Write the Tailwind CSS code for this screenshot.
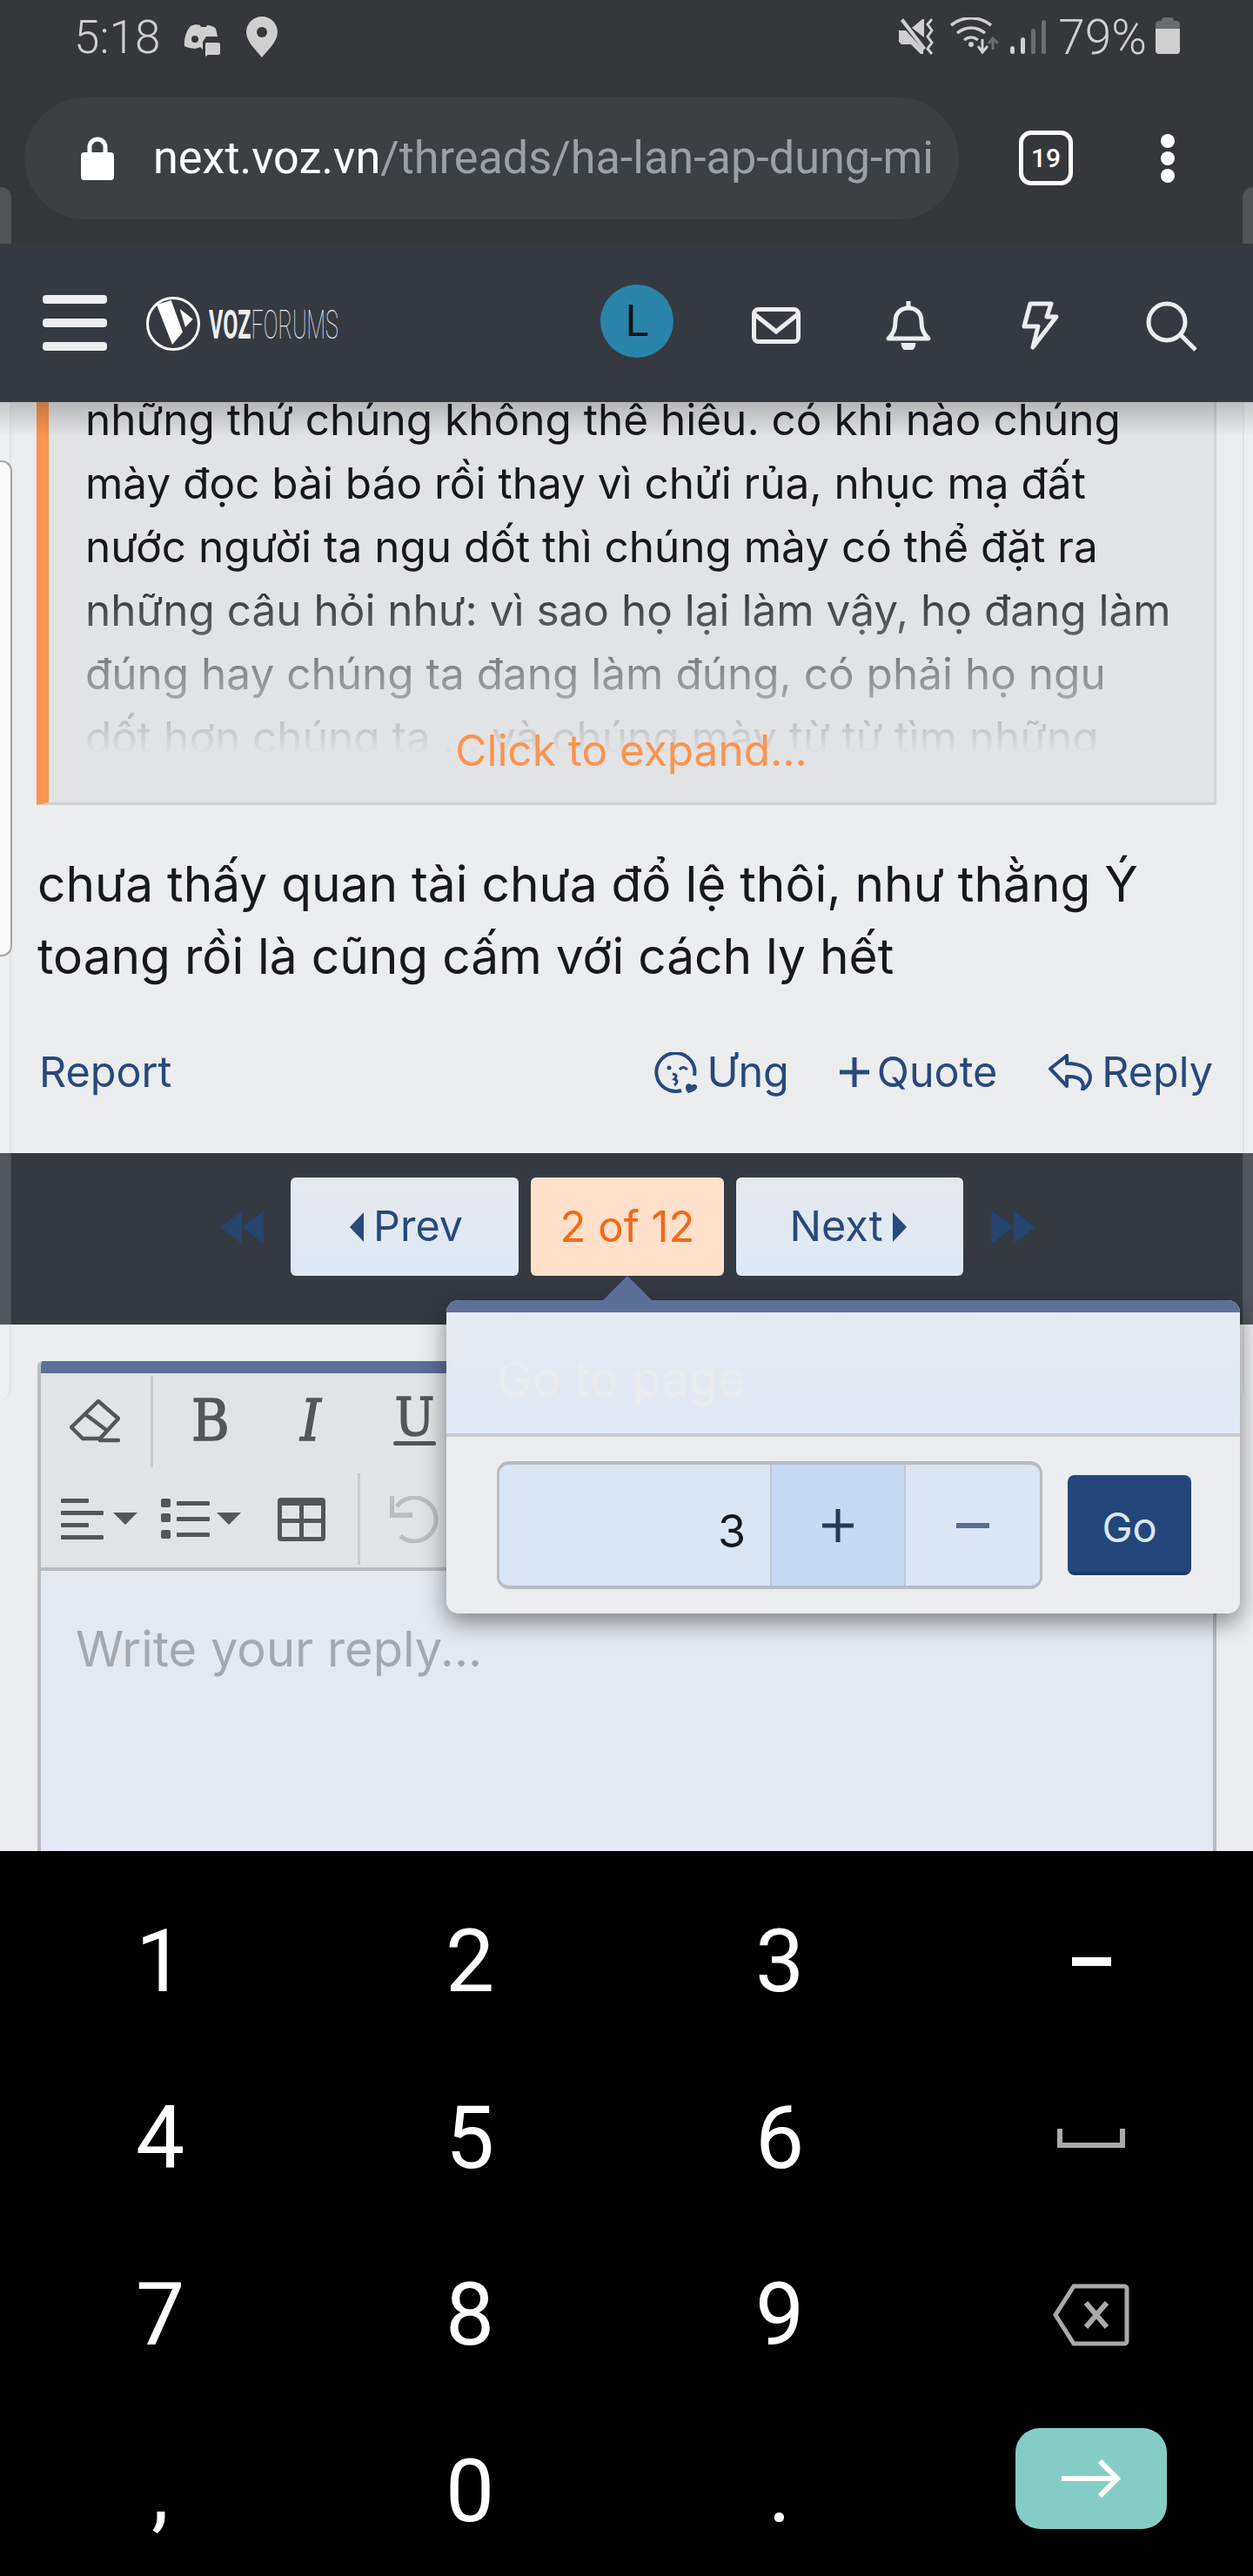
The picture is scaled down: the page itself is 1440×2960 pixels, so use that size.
<!DOCTYPE html>
<html lang="vi">
<head>
  <meta charset="UTF-8" />
  <title>next.voz.vn</title>
  <script src="https://cdn.jsdelivr.net/npm/@tailwindcss/browser@4"></script>
</head>
<body class="font-['Inter',sans-serif]">
<div class="relative w-[1440px] h-[2960px] overflow-hidden bg-[#ebedef] flex flex-col">

  <!-- status bar -->
  <div class="h-[105px] shrink-0 bg-[#36373b] flex items-start justify-between text-[#cfcfcf] font-['Roboto',sans-serif]">
    <div class="flex items-start">
      <span class="ml-[85px] mt-[13px] text-[53px] leading-[60px] font-light">5:18</span>
      <svg class="ml-[27px] mt-[28px] w-[42px] h-[37px]" viewBox="0 0 42 37" fill="#cfcfcf"><path d="M8 2c4-2 8-2 11-1l1 2h6l1-2c4 0 7 1 10 4l2 9h-13l-4 6v9H22l-3-3c-5 3-11 2-18-1C0 18 3 7 8 2z"/><circle cx="13" cy="17" r="4" fill="#36373b"/><path d="M26 21h14a2 2 0 0 1 2 2v10a2 2 0 0 1-2 2H28l-3 2v-14a2 2 0 0 1 1-2z"/></svg>
      <svg class="ml-[30px] mt-[19px] w-[36px] h-[47px]" viewBox="0 0 36 47"><path fill="#cfcfcf" d="M18 0c10 0 18 8 18 18 0 11-12 21-18 29C12 39 0 29 0 18 0 8 8 0 18 0z"/><circle cx="18" cy="18" r="6" fill="#36373b"/></svg>
    </div>
    <div class="flex items-start">
      <svg class="mt-[21px] w-[44px] h-[42px]" viewBox="0 0 44 42" fill="#cfcfcf"><path d="M0 14h8l20 22v5h-3L14 30H3l-3-3z"/><path d="M2 3l3-3 26 34-3 3z"/><path d="M15 11L27 1h2v21z"/><path d="M38 1l-5 6 5 7-5 7 5 7-5 7 5 6" fill="none" stroke="#cfcfcf" stroke-width="3"/></svg>
      <svg class="ml-[15px] mt-[20px] w-[58px] h-[43px]" viewBox="0 0 58 43" fill="none"><path d="M1 9c14-11 32-11 46 0M8 18c10-8 22-8 32 0M16 26c5-4 11-4 16 0" stroke="#cfcfcf" stroke-width="3.5"/><circle cx="24" cy="31" r="3" fill="#cfcfcf"/><path d="M37 25v14M32 33l5 7 6-7" stroke="#cfcfcf" stroke-width="3"/><path d="M49 37V25M44 30l5-6 6 6" stroke="#6c6d70" stroke-width="3"/></svg>
      <div class="ml-[11px] mt-[23px] h-[39px] flex items-end gap-[7px]">
        <span class="w-[5px] h-[9px] rounded-sm bg-[#cfcfcf]"></span>
        <span class="w-[5px] h-[19px] rounded-sm bg-[#cfcfcf]"></span>
        <span class="w-[5px] h-[29px] rounded-sm bg-[#6c6d70]"></span>
        <span class="w-[5px] h-[39px] rounded-sm bg-[#6c6d70]"></span>
      </div>
      <span class="ml-[14px] mt-[13px] text-[55px] leading-[60px] font-light">79%</span>
      <div class="ml-[10px] mr-[84px] mt-[20px] w-[28px] h-[42px] flex flex-col items-center">
        <span class="w-[14px] h-[4px] bg-[#6c6d70] rounded-t-sm"></span>
        <span class="w-[28px] h-[9px] bg-[#6c6d70] rounded-t-sm"></span>
        <span class="w-[28px] h-[29px] bg-[#cfcfcf] rounded-b-sm"></span>
      </div>
    </div>
  </div>

  <!-- chrome url bar -->
  <div class="h-[175px] shrink-0 bg-[#36373b] flex items-start">
    <div class="ml-[28px] mt-[7px] w-[1074px] h-[140px] rounded-[70px] bg-[#3c4043] flex items-center">
      <svg class="ml-[65px] w-[38px] h-[50px]" viewBox="0 0 38 50"><path d="M10 20v-8a9 9 0 0 1 18 0v8" fill="none" stroke="#fff" stroke-width="5"/><rect x="0" y="18" width="38" height="32" rx="4" fill="#fff"/></svg>
      <div class="ml-[45px] w-[895px] overflow-hidden whitespace-nowrap text-[52.200px] leading-[60px] font-['Roboto',sans-serif] text-[#9aa0a6]"><span class="text-white">next.voz.vn</span>/threads/ha-lan-ap-dung-mi</div>
    </div>
    <div class="ml-[69px] mt-[45px] w-[62px] h-[63px] rounded-[14px] border-[5px] border-white flex items-center justify-center text-white text-[30px] leading-none font-medium font-['Roboto',sans-serif]">19</div>
    <div class="ml-[101px] mt-[49px] w-[16px] flex flex-col gap-[4px]">
      <span class="w-[16px] h-[16px] rounded-full bg-white"></span>
      <span class="w-[16px] h-[16px] rounded-full bg-white"></span>
      <span class="w-[16px] h-[16px] rounded-full bg-white"></span>
    </div>
  </div>

  <!-- forum nav -->
  <div class="relative z-10 h-[182px] shrink-0 bg-[#353a42] flex items-start">
    <div class="ml-[49px] mt-[59px] w-[74px] flex flex-col gap-[17px]">
      <span class="h-[10px] rounded-sm bg-[#ebedef]"></span>
      <span class="h-[10px] rounded-sm bg-[#ebedef]"></span>
      <span class="h-[10px] rounded-sm bg-[#ebedef]"></span>
    </div>
    <svg class="ml-[45px] mt-[61px] w-[62px] h-[62px]" viewBox="0 0 62 62"><circle cx="31" cy="31" r="29.5" fill="none" stroke="#fff" stroke-width="3"/><path fill="#fff" d="M12 9l16.700-5L42 40.700 30 55zM38.700 14l15 11.700L45 35z"/></svg>
    <div class="ml-[10px] mt-[68px] w-[150px] h-[50px] whitespace-nowrap text-[#ebedef] text-[46px] leading-[50px] font-['Roboto',sans-serif]"><span class="inline-block origin-left scale-x-[0.545]"><b class="font-bold">VOZ</b><span class="font-thin">FORUMS</span></span></div>
    <div class="ml-[300px] mt-[47px] w-[84px] h-[84px] rounded-full bg-[#2a84a9] flex items-center justify-center text-[#10151c] text-[50px] leading-none font-['Roboto',sans-serif]">L</div>
    <svg class="ml-[90px] mt-[73px] w-[56px] h-[42px]" viewBox="0 0 56 42" fill="none" stroke="#ebedef" stroke-width="5"><rect x="2.500" y="2.500" width="51" height="37" rx="5"/><path d="M3 8l25 20L53 8"/></svg>
    <svg class="ml-[98px] mt-[66px] w-[52px] h-[56px]" viewBox="0 0 52 56" fill="none" stroke="#ebedef" stroke-width="5"><path d="M3 43c6-6 8-11 8-20 0-9 6-15 15-15s15 6 15 15c0 9 2 14 8 20z" stroke-linejoin="round"/><path d="M26 0v8" /><path d="M20 48c0 10 12 10 12 0" fill="#ebedef"/></svg>
    <svg class="ml-[103px] mt-[66px] w-[44px] h-[56px]" viewBox="0 0 44 56" fill="none" stroke="#ebedef" stroke-width="5" stroke-linejoin="round"><path d="M11 3h24l-5 15h11L14 53l6-24H4z"/></svg>
    <svg class="ml-[99px] mt-[66px] w-[60px] h-[58px]" viewBox="0 0 60 58" fill="none" stroke="#ebedef" stroke-width="5"><circle cx="25" cy="24" r="21"/><path d="M41 39l17 17"/></svg>
  </div>

  <!-- scrolled post -->
  <div class="h-[863px] shrink-0 flex flex-col">
    <div class="mx-[42px] w-[1356px] h-[463px] shrink-0 relative bg-[#e2e3e5] border-l-[14px] border-l-[#fb9450] border-r-[3px] border-r-[#d3d4d6] border-b-[3px] border-b-[#d0d1d3]">
      <div class="relative h-[405px] overflow-hidden">
        <div class="-mt-[16px] ml-[42px] w-[1270px] text-[#15181d] text-[49.500px] leading-[73px] whitespace-nowrap">
          <p>những thứ chúng không thể hiểu. có khi nào chúng</p>
          <p>mày đọc bài báo rồi thay vì chửi rủa, nhục mạ đất</p>
          <p>nước người ta ngu dốt thì chúng mày có thể đặt ra</p>
          <p>những câu hỏi như: vì sao họ lại làm vậy, họ đang làm</p>
          <p>đúng hay chúng ta đang làm đúng, có phải họ ngu</p>
          <p>dốt hơn chúng ta . . và chúng mày từ từ tìm những</p>
        </div>
        <div class="absolute left-0 right-0 bottom-0 h-[220px] bg-gradient-to-b from-[#e2e3e5]/0 to-[#e2e3e5]"></div>
      </div>
      <div class="absolute left-0 right-0 top-[364px] text-center text-[#fb9450] text-[49.500px] leading-[73px]">Click to expand...</div>
    </div>
    <div class="ml-[43px] mt-[49px] text-[#15181d] text-[56.800px] leading-[83px] whitespace-nowrap">
      <p>chưa thấy quan tài chưa đổ lệ thôi, như thằng Ý</p>
      <p>toang rồi là cũng cấm với cách ly hết</p>
    </div>
    <div class="mt-[62px] h-[60px] flex items-center text-[#27497c] text-[48.500px] leading-[60px]">
      <span class="ml-[45px]">Report</span>
      <svg class="ml-[555px] w-[50px] h-[47px]" viewBox="0 0 50 47" fill="none" stroke="#27497c" stroke-width="4"><path d="M31 44A22 22 0 1 1 46 27"/><circle cx="17" cy="18" r="2.500" fill="#27497c" stroke="none"/><path d="M29 20q4-5 9 0" stroke-width="3"/><path d="M21 25q7 1 2 6q6 2 0 7" stroke-width="3"/><path fill="#27497c" stroke="none" d="M36 40c0-4 5-5 7-2 2-2 7-1 6 3-1 3-6 5-10 6-2-2-3-4-3-7z"/></svg>
      <span class="ml-[10px]">Ưng</span>
      <svg class="ml-[58px] w-[34px] h-[34px]" viewBox="0 0 34 34" stroke="#27497c" stroke-width="5"><path d="M17 0v34M0 17h34"/></svg>
      <span class="ml-[9px]">Quote</span>
      <svg class="ml-[59px] w-[50px] h-[42px]" viewBox="0 0 50 42" fill="none" stroke="#27497c" stroke-width="4" stroke-linejoin="round"><path d="M2 17L21 2v9c17 0 27 6 27 16 0 6-4 11-9 14 1-3 1-6 0-8-3-6-9-7-18-7v11z"/></svg>
      <span class="ml-[11px]">Reply</span>
    </div>
  </div>

  <!-- pagination bar -->
  <div class="h-[197px] shrink-0 bg-[#353a42] flex items-start">
    <svg class="ml-[253px] mt-[66px] w-[50px] h-[38px]" viewBox="0 0 50 38" fill="#27456f"><path d="M25 0v38L0 19zM50 0v38L25 19z"/></svg>
    <div class="ml-[31px] mt-[28px] w-[262px] h-[113px] pl-[4px] rounded-md bg-gradient-to-b from-[#e6e9ed] to-[#dde8f5] flex items-center justify-center text-[#27497c] text-[48.500px] leading-none">
      <svg class="mr-[11px] w-[16px] h-[34px]" viewBox="0 0 16 34" fill="#27497c"><path d="M16 0v34L0 17z"/></svg>Prev
    </div>
    <div class="ml-[14px] mt-[28px] w-[222px] h-[113px] rounded-md bg-[#ffe0cb] flex items-center justify-center text-[#f26a1b] text-[49px] leading-none">2 of 12</div>
    <div class="ml-[14px] mt-[28px] w-[261px] h-[113px] pr-[4px] rounded-md bg-gradient-to-b from-[#e6e9ed] to-[#dde8f5] flex items-center justify-center text-[#27497c] text-[48.500px] leading-none">
      Next<svg class="ml-[11px] w-[16px] h-[34px]" viewBox="0 0 16 34" fill="#27497c"><path d="M0 0v34l16-17z"/></svg>
    </div>
    <svg class="ml-[32px] mt-[66px] w-[51px] h-[38px]" viewBox="0 0 50 38" fill="#27456f"><path d="M0 0v38l25-19zM25 0v38l25-19z"/></svg>
  </div>

  <!-- editor -->
  <div class="flex-1 min-h-0 pt-[42px]">
    <div class="ml-[43px] w-[1355px] h-[563px] border-x-[4px] border-[#b8bcc2] bg-[#e4e9f1] rounded-t-md overflow-hidden flex flex-col">
      <div class="h-[14px] shrink-0 bg-[#5c6f99]"></div>
      <div class="h-[227px] shrink-0 bg-[#e1e3e5] border-b-[4px] border-[#b8bcc2] text-[#54565a]">
        <div class="h-[110px] flex items-center font-['DejaVu_Serif_Condensed','DejaVu_Serif',serif] [-webkit-text-stroke:1.5px_#54565a]">
          <svg class="ml-[33px] w-[58px] h-[50px]" viewBox="0 0 58 50" fill="none" stroke="#54565a" stroke-width="4.500" stroke-linejoin="round" stroke-linecap="round"><path d="M33 2l23 20-21 23H15L2 32z"/><path d="M18 17l24 18"/><path d="M35 47h21"/></svg>
          <span class="ml-[35px] w-[3px] h-[105px] bg-[#c9cbce]"></span>
          <span class="ml-[44px] w-[38px] text-center text-[66px] leading-none">B</span>
          <span class="ml-[81px] w-[36px] text-center text-[66px] leading-none italic">I</span>
          <span class="ml-[77px] w-[49px] h-[56px] flex flex-col items-center justify-between">
            <span class="text-[60px] leading-[46px]">U</span>
            <span class="w-[49px] h-[5px] rounded-sm bg-[#54565a]"></span>
          </span>
        </div>
        <div class="h-[109px] flex items-center">
          <svg class="ml-[23px] mt-[6px] w-[88px] h-[47px]" viewBox="0 0 88 47" fill="#54565a"><rect width="32" height="5" rx="1"/><rect y="14" width="49" height="5" rx="1"/><rect y="28" width="32" height="5" rx="1"/><rect y="42" width="49" height="5" rx="1"/><path d="M60 16h28L74 30z"/></svg>
          <svg class="ml-[27px] mt-[6px] w-[92px] h-[47px]" viewBox="0 0 92 47" fill="#54565a"><rect width="11" height="10" rx="2"/><rect y="17" width="11" height="10" rx="2"/><rect y="36" width="11" height="10" rx="2"/><rect x="18" y="3" width="38" height="5" rx="1"/><rect x="18" y="21" width="38" height="5" rx="1"/><rect x="18" y="39" width="38" height="5" rx="1"/><path d="M64 16h28L78 30z"/></svg>
          <svg class="ml-[42px] mt-[6px] w-[55px] h-[50px]" viewBox="0 0 55 50" fill="#54565a" fill-rule="evenodd"><path d="M4 0h47a4 4 0 0 1 4 4v42a4 4 0 0 1-4 4H4a4 4 0 0 1-4-4V4a4 4 0 0 1 4-4zM5 9v15h20V9zM30 9v15h20V9zM5 29v16h20V29zM30 29v16h20V29z"/></svg>
          <span class="ml-[37px] mt-[5px] w-[3px] h-[105px] bg-[#c9cbce]"></span>
          <svg class="ml-[34px] mt-[6px] w-[56px] h-[54px]" viewBox="0 0 56 54" fill="none" stroke="#bbbdc0" stroke-width="5"><path d="M8 12A25 25 0 1 1 12 46"/><path d="M2 0v22h24" stroke-width="6"/></svg>
        </div>
      </div>
      <div class="pl-[40px] pt-[55px] text-[#a5a8ad] text-[56px] leading-[70px]">Write your reply...</div>
    </div>
  </div>

  <!-- number keyboard -->
  <div class="h-[833px] shrink-0 bg-black pt-[25px] pl-[6px] grid grid-cols-[repeat(4,356px)] grid-rows-[repeat(4,203px)] text-white text-[100px] leading-none font-['Roboto',sans-serif] text-center items-center justify-items-center">
    <span>1</span><span>2</span><span>3</span>
    <span class="ml-[4px] block w-[45px] h-[10px] bg-white"></span>
    <span>4</span><span>5</span><span>6</span>
    <svg class="ml-[4px] w-[78px] h-[22px]" viewBox="0 0 78 22" fill="none" stroke="#aaaaaa" stroke-width="6"><path d="M3 0v19h72V0"/></svg>
    <span>7</span><span>8</span><span>9</span>
    <svg class="ml-[4px] w-[88px] h-[72px]" viewBox="0 0 88 72" fill="none" stroke="#aaaaaa" stroke-width="5"><path d="M24 3h58a3 3 0 0 1 3 3v60a3 3 0 0 1-3 3H24L3 36z"/><path d="M38 22l24 28M62 22L38 50" stroke-width="6"/></svg>
    <span>,</span><span>0</span><span>.</span>
    <div class="ml-[4px] self-start mt-[29px] w-[174px] h-[116px] rounded-[28px] bg-[#85cdc4] flex items-center justify-center">
      <svg class="w-[68px] h-[44px]" viewBox="0 0 68 44" fill="none" stroke="#fff" stroke-width="6"><path d="M0 22h64M44 2l20 20-20 20"/></svg>
    </div>
  </div>

  <!-- go to page popup -->
  <div class="absolute z-20 left-[513px] top-[1494px] w-[912px] h-[360px] rounded-[14px] bg-[#ebedef] shadow-[0_10px_28px_rgba(0,0,0,0.45)]">
    <div class="absolute left-[180px] -top-[28px] w-0 h-0 border-x-[28px] border-x-transparent border-b-[28px] border-b-[#5c6f99]"></div>
    <div class="h-[14px] rounded-t-[14px] bg-[#5c6f99]"></div>
    <div class="h-[143px] bg-gradient-to-b from-[#e6e9f0] to-[#dfe8f5] border-b-[4px] border-[#c8cbd0] pl-[58px] pt-[41px] text-[#e9ebee] text-[55px] leading-[70px]">Go to page</div>
    <div class="flex items-start">
      <div class="ml-[58px] mt-[28px] w-[627px] h-[147px] rounded-[14px] border-[3px] border-t-[4px] border-b-[4px] border-[#b8bcc2] bg-[#dbe6f4] flex overflow-hidden">
        <div class="w-[311px] pr-[28px] pt-[42px] text-right text-[#15181d] text-[52px] leading-[70px]">3</div>
        <div class="w-[156px] border-x-[2px] border-[#c3c6cb] bg-[#c6daf3] flex items-center justify-center">
          <svg class="w-[36px] h-[38px]" viewBox="0 0 36 38" stroke="#27385a" stroke-width="5"><path d="M18 0v38M0 19h36"/></svg>
        </div>
        <div class="flex-1 flex items-center justify-center">
          <span class="block w-[38px] h-[6px] bg-[#5c6f99]"></span>
        </div>
      </div>
      <div class="ml-[29px] mt-[44px] w-[142px] h-[115px] rounded-lg border-b-[4px] border-[#1c3a66] bg-[#23477a] pt-[8px] flex items-center justify-center text-[#dbe6f4] text-[47px] leading-none">Go</div>
    </div>
  </div>

  <!-- nav shadow over the post, tabs behind at the edges -->
  <div class="absolute left-[0px] top-[462px] w-full h-[40px] bg-gradient-to-b from-black/20 to-black/0"></div>
  <div class="absolute left-0 top-[215px] w-[13px] h-[1393px] rounded-tr-xl rounded-br-xl bg-white/15 border-r-2 border-black/5"></div>
  <div class="absolute right-0 top-[215px] w-[12px] h-[1393px] rounded-tl-xl rounded-bl-xl bg-white/15 border-l-2 border-black/5"></div>
  <div class="absolute left-0 top-[529px] w-[14px] h-[570px] rounded-r-xl border-y-2 border-r-2 border-[#a3a3a3] bg-[#fafafa]"></div>
</div>
</body>
</html>
